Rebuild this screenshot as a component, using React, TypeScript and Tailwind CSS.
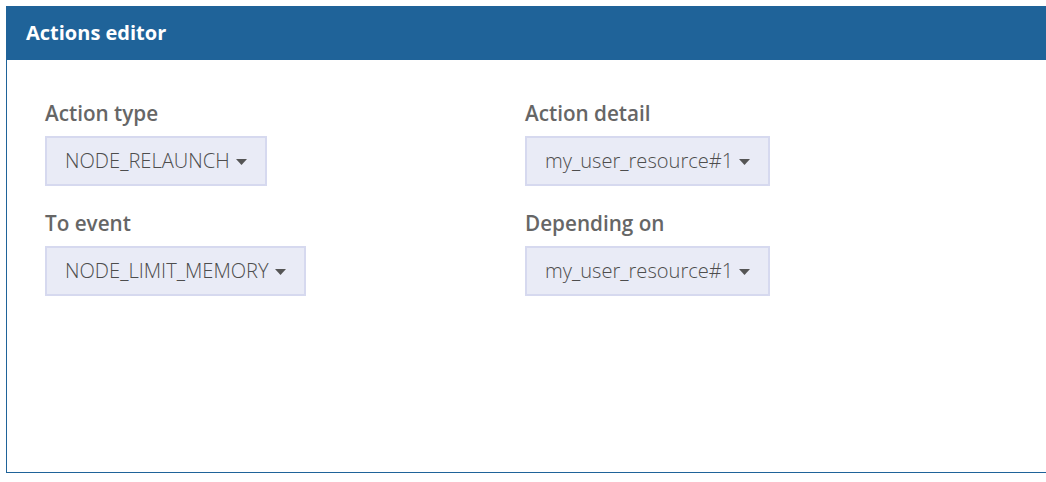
import { useState } from "react";

type Field = {
  label: string;
  value: string;
};

const fields: Field[] = [
  { label: "Action type", value: "NODE_RELAUNCH" },
  { label: "Action detail", value: "my_user_resource#1" },
  { label: "To event", value: "NODE_LIMIT_MEMORY" },
  { label: "Depending on", value: "my_user_resource#1" },
];

function Caret() {
  return (
    <svg width="11" height="6" viewBox="0 0 11 6" className="ml-[6px] mt-[2px]">
      <path d="M0 0 L11 0 L5.5 6 Z" fill="#555" />
    </svg>
  );
}

function SelectField({ label, value }: Field) {
  const [open, setOpen] = useState(false);
  return (
    <div className="flex flex-col items-start">
      <div className="text-[20.7px] font-semibold text-[#666] leading-[27px] mt-[1px]">{label}</div>
      <button
        onClick={() => setOpen(!open)}
        className="mt-[9px] h-[50px] pl-[18px] pr-[18px] flex items-center bg-[#e9ebf6] border-2 border-[#d6d9ef] text-[20.1px] font-light text-[#4d4d4d]"
      >
        <span className="mt-[1px]">{value}</span>
        <Caret />
      </button>
    </div>
  );
}

export default function App() {
  return (
    <div className="w-[1046px] h-[482px] bg-white pt-[6px] pl-[6px]" style={{ fontFamily: "'Open Sans', sans-serif" }}>
      <section className="h-[467px] border-l border-b border-[#1f6399] flex flex-col">
        <div className="h-[54px] bg-[#1f6399] flex items-center pl-[19px]">
          <h1 className="text-white font-bold text-[20px]">Actions editor</h1>
        </div>
        <div className="grid grid-cols-[480px_1fr] gap-y-[23px] pl-[38px] pt-[39px]">
          {fields.map((f) => (
            <SelectField key={f.label} {...f} />
          ))}
        </div>
      </section>
    </div>
  );
}
